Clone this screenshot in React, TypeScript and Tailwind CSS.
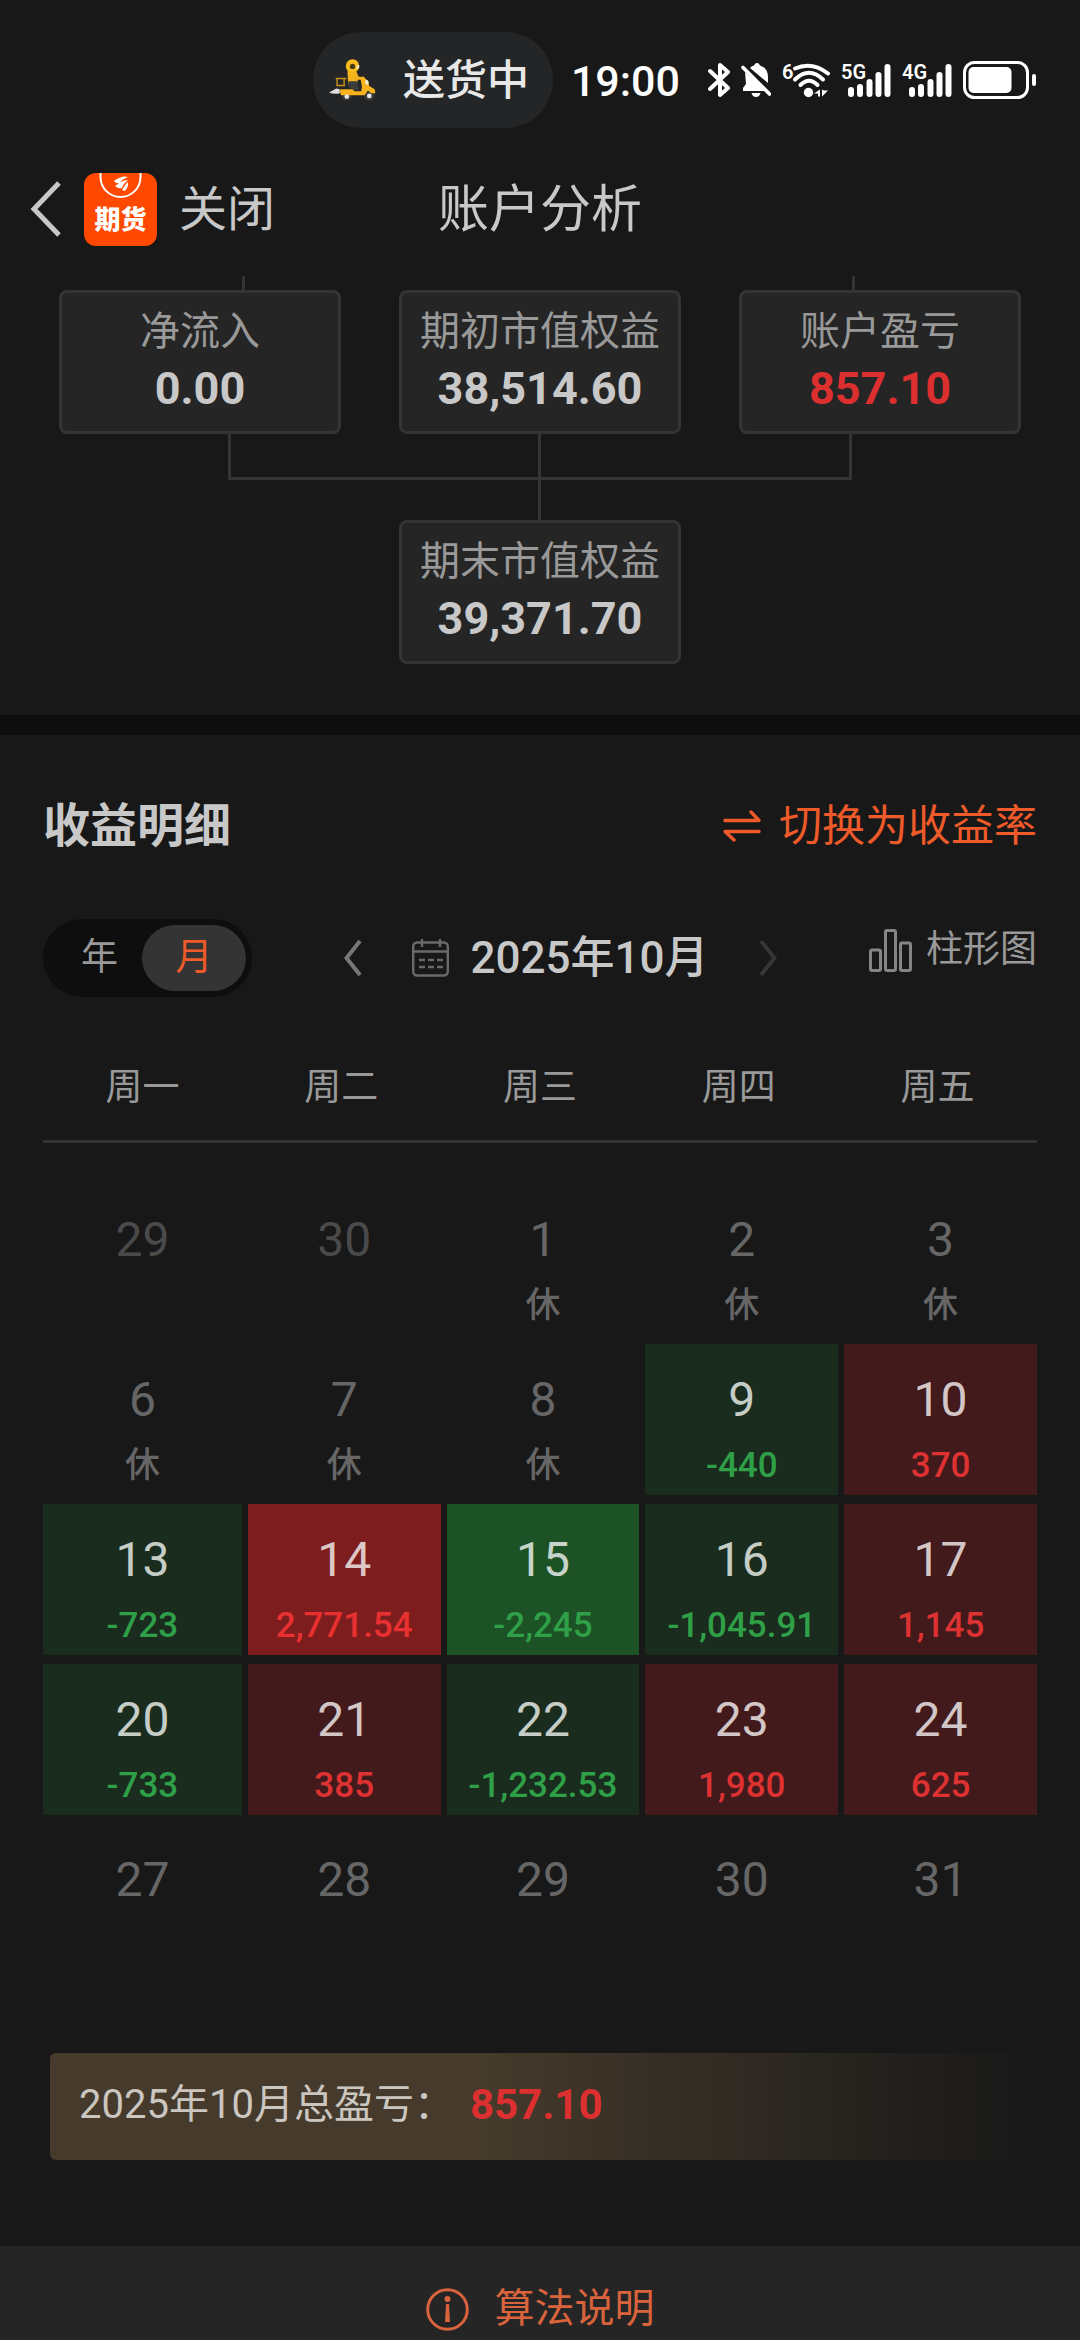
import React, { useState } from 'react';
import clsx from 'clsx';

type Tone = 'lossLight' | 'lossDeep' | 'gainLight' | 'gainDeep' | 'rest' | 'outside';

interface Day {
  day: number;
  note?: string;
  tone: Tone;
}

const weekdays = ['周一', '周二', '周三', '周四', '周五'];

const weeks: Day[][] = [
  [
    { day: 29, tone: 'outside' },
    { day: 30, tone: 'outside' },
    { day: 1, note: '休', tone: 'rest' },
    { day: 2, note: '休', tone: 'rest' },
    { day: 3, note: '休', tone: 'rest' },
  ],
  [
    { day: 6, note: '休', tone: 'rest' },
    { day: 7, note: '休', tone: 'rest' },
    { day: 8, note: '休', tone: 'rest' },
    { day: 9, note: '-440', tone: 'lossLight' },
    { day: 10, note: '370', tone: 'gainLight' },
  ],
  [
    { day: 13, note: '-723', tone: 'lossLight' },
    { day: 14, note: '2,771.54', tone: 'gainDeep' },
    { day: 15, note: '-2,245', tone: 'lossDeep' },
    { day: 16, note: '-1,045.91', tone: 'lossLight' },
    { day: 17, note: '1,145', tone: 'gainLight' },
  ],
  [
    { day: 20, note: '-733', tone: 'lossLight' },
    { day: 21, note: '385', tone: 'gainLight' },
    { day: 22, note: '-1,232.53', tone: 'lossLight' },
    { day: 23, note: '1,980', tone: 'gainLight' },
    { day: 24, note: '625', tone: 'gainLight' },
  ],
  [
    { day: 27, tone: 'rest' },
    { day: 28, tone: 'rest' },
    { day: 29, tone: 'rest' },
    { day: 30, tone: 'rest' },
    { day: 31, tone: 'rest' },
  ],
];

const cellStyle: Record<Tone, string> = {
  lossLight: 'bg-[#1a2c1e]',
  lossDeep: 'bg-[#1c5225]',
  gainLight: 'bg-[#421a1b]',
  gainDeep: 'bg-[#7d1d1d]',
  rest: '',
  outside: '',
};

const dayStyle: Record<Tone, string> = {
  lossLight: 'text-[#c6cdc7]',
  lossDeep: 'text-[#c6d3c8]',
  gainLight: 'text-[#d3c6c6]',
  gainDeep: 'text-[#dcc6c6]',
  rest: 'text-[#666666]',
  outside: 'text-[#4a4a4a]',
};

const noteStyle: Record<Tone, string> = {
  lossLight: 'text-[#2fa048]',
  lossDeep: 'text-[#2fa048]',
  gainLight: 'text-[#de3232]',
  gainDeep: 'text-[#e83030]',
  rest: 'text-[#666666]',
  outside: 'text-[#4a4a4a]',
};

function ScooterIcon() {
  return (
    <svg className="h-[42px] w-[47px]" viewBox="0 0 140 125" aria-hidden="true">
      <circle cx="53" cy="110" r="14" fill="#3b3b3b" />
      <circle cx="120" cy="110" r="14" fill="#3b3b3b" />
      <path d="M20 58h32M24 60v20M45 60v20M22 79h26" stroke="#c9921c" strokeWidth="4" fill="none" />
      <path d="M55 36h26l7 16 16 2v8H86l-3 14H57z" fill="#f2b31d" />
      <circle cx="70" cy="21" r="20" fill="#f9bd1f" />
      <circle cx="70" cy="22" r="8" fill="#4a3a12" />
      <path d="M83 17l8 3-2 8-7 1z" fill="#f3e6c4" />
      <path d="M58 66h26l6 26H70l-14-12z" fill="#3a3b3a" />
      <path d="M93 54l10-2 13 14 4 14 16 10 2 12h-12l-10-8-10 14H36q-6-8-2-18h36l6 6h20l2-14z" fill="#f7b21c" />
      <path d="M108 62a8 8 0 0 1 10 8l-2 8-8-4z" fill="#f4ead2" />
      <path d="M0 100l22-12 10 2v12q-16 4-32-2z" fill="#dedede" />
      <circle cx="53" cy="112" r="7" fill="#e6e6e6" />
      <circle cx="120" cy="110" r="7" fill="#e6e6e6" />
    </svg>
  );
}

function BluetoothIcon() {
  return (
    <svg className="h-[36px] w-[22px]" viewBox="0 0 22 36" fill="none" stroke="#fff" strokeWidth="4" strokeLinecap="round" strokeLinejoin="round" aria-hidden="true">
      <path d="M2 9l18 17-8 7V3l8 7L2 27" />
    </svg>
  );
}

function BellOffIcon() {
  return (
    <svg className="h-[36px] w-[30px]" viewBox="0 0 30 36" aria-hidden="true">
      <path d="M4 10l21 19H2v-3l3-4z" fill="#fff" />
      <path d="M9 6q1-2 4-2.600Q14 1 16 1q2 0 3 2.400 8 2.600 8 12V21z" fill="#fff" />
      <path d="M10.500 31h9q-1 4-4.500 4t-4.500-4z" fill="#fff" />
      <path d="M2 5.500L28.500 32" stroke="#fff" strokeWidth="3.600" strokeLinecap="round" />
    </svg>
  );
}

function WifiIcon() {
  return (
    <div className="relative h-[36px] w-[48px]">
      <svg className="size-full" viewBox="0 0 48 36" fill="none" aria-hidden="true">
        <g stroke="#fff" strokeWidth="4" strokeLinecap="round">
          <path d="M13 6.500Q30-1 46 11.500" />
          <path d="M13 17.500Q27 4 41 17.500" />
          <path d="M18.500 23Q27 14.500 35.500 23" />
        </g>
        <circle cx="26.500" cy="30.500" r="4.700" fill="#fff" />
        <path d="M32 31.500l6-4v7h-2v-3zM40 27.500v7l6-6h-4z" fill="#fff" />
      </svg>
      <span className="absolute left-0 top-0 text-[20px] font-semibold leading-[20px]">6</span>
    </div>
  );
}

function SignalIcon({ label }: { label: string }) {
  return (
    <div className="relative h-[36px] w-[50px]">
      <svg className="size-full" viewBox="0 0 50 36" fill="none" stroke="#fff" strokeWidth="6" strokeLinecap="round" aria-hidden="true">
        <path d="M10 28v4M19 25v7M28.500 20v12M37.500 13v19M46.500 5v27" />
      </svg>
      <span className="absolute left-0 top-0 text-[20px] font-semibold leading-[20px]">{label}</span>
    </div>
  );
}

function BatteryIcon() {
  return (
    <svg className="h-[38px] w-[73px]" viewBox="0 0 73 38" aria-hidden="true">
      <rect x="1.500" y="1.500" width="63" height="35" rx="10" fill="none" stroke="#fff" strokeWidth="3" />
      <rect x="5.500" y="6" width="43" height="26" rx="5" fill="#fff" />
      <rect x="69" y="13" width="4" height="12" rx="2" fill="#fff" />
    </svg>
  );
}

function StatusBar() {
  return (
    <div className="flex items-center justify-end pr-[44px] pt-8 text-white">
      <div className="flex h-24 w-60 shrink-0 items-center justify-between rounded-full bg-[#232527] pl-4 pr-6">
        <ScooterIcon />
        <span className="pt-[2px] text-[42px] font-medium leading-[60px] text-[#e8e8e8]">送货中</span>
      </div>
      <span className="ml-[18px] pt-[2px] text-[43px] font-medium leading-[60px]">19:00</span>
      <div className="ml-[28px] flex items-center gap-[11px]">
        <BluetoothIcon />
        <BellOffIcon />
        <WifiIcon />
        <SignalIcon label="5G" />
        <SignalIcon label="4G" />
        <BatteryIcon />
      </div>
    </div>
  );
}

function AppLogo() {
  return (
    <div className="relative size-[73px] overflow-hidden rounded-[12px] bg-[#ff4800]">
      <svg className="size-full" viewBox="0 0 73 73" fill="none" aria-hidden="true">
        <path d="M16.500 0v4a20 20 0 0 0 40 0V0" stroke="#fff" strokeWidth="2" />
        <path d="M30 8Q38 2 44 4q-7 3-8 6-4 1-6-2zM31 13q9-7 13-6-5 4-6 8-4 1-7-2zM38 17q5-8 6-8 1 4-3 9z" fill="#fff" />
      </svg>
      <span className="absolute inset-x-0 top-[32px] text-center text-[26px] font-black leading-[30px] text-white">期货</span>
    </div>
  );
}

function Header() {
  return (
    <header className="mt-[31px] grid h-[100px] grid-cols-[1fr_auto_1fr] items-center px-[30px] text-[#c8c8c8]">
      <div className="flex items-center">
        <button type="button" aria-label="返回">
          <svg className="h-[56px] w-[32px]" viewBox="0 0 32 56" fill="none" stroke="currentColor" strokeWidth="5" aria-hidden="true">
            <path d="M29 2L4 28l25 26" />
          </svg>
        </button>
        <div className="ml-[22px]">
          <AppLogo />
        </div>
        <button type="button" className="ml-[22px] pt-[2px] text-[48px] leading-[60px]">关闭</button>
      </div>
      <h1 className="pt-[2px] text-[51px] leading-[60px]">账户分析</h1>
    </header>
  );
}

interface EquityCardProps {
  label: string;
  value: string;
  gain?: boolean;
}

function EquityCard({ label, value, gain }: EquityCardProps) {
  return (
    <div className="flex h-[144px] flex-col items-center rounded-[8px] border-[3px] border-[#343434] bg-[#252525] pt-[9px]">
      <span className="text-[40px] leading-[60px] text-[#999999]">{label}</span>
      <span className={clsx('text-[45px] font-bold leading-[54px]', gain ? 'text-[#dc2f2f]' : 'text-[#c8c8c8]')}>
        {value}
      </span>
    </div>
  );
}

function EquityFlow() {
  return (
    <section className="pb-[51px] pt-[17px]">
      <svg className="block w-full" viewBox="0 0 1080 14" fill="none" stroke="#343434" strokeWidth="3" aria-hidden="true">
        <path d="M243.500 0v14M853.500 0v14" />
      </svg>
      <div className="grid grid-cols-3 gap-[58px] px-[59px]">
        <EquityCard label="净流入" value="0.00" />
        <EquityCard label="期初市值权益" value="38,514.60" />
        <EquityCard label="账户盈亏" value="857.10" gain />
      </div>
      <svg className="block w-full" viewBox="0 0 1080 86" fill="none" stroke="#343434" strokeWidth="3" aria-hidden="true">
        <path d="M229.500 0v44.500h621V0M539.500 0v86" />
      </svg>
      <div className="grid grid-cols-3 gap-[58px] px-[59px]">
        <div className="col-start-2">
          <EquityCard label="期末市值权益" value="39,371.70" />
        </div>
      </div>
    </section>
  );
}

function MonthPicker() {
  return (
    <div className="flex items-center gap-[50px]">
      <button type="button" aria-label="上个月" className="text-[#777777]">
        <svg className="h-[36px] w-[18px]" viewBox="0 0 18 36" fill="none" stroke="currentColor" strokeWidth="4" aria-hidden="true">
          <path d="M16 1L2.500 18 16 35" />
        </svg>
      </button>
      <button type="button" className="flex items-center gap-[21px]">
        <svg className="h-[38px] w-[37px]" viewBox="0 0 37 38" fill="none" stroke="#6a6a6a" strokeWidth="2.400" aria-hidden="true">
          <rect x="1.200" y="3.500" width="34.600" height="33" rx="4" />
          <path d="M1 12.500h35M10 0v8M28 0v8" />
          <path d="M7 21h6M16 21h6M25 21h6M7 28h6M16 28h6M25 28h6" />
        </svg>
        <span className="text-[44px] font-medium leading-[60px] text-[#c8c8c8]">2025年10月</span>
      </button>
      <button type="button" aria-label="下个月" className="text-[#363636]">
        <svg className="h-[36px] w-[18px]" viewBox="0 0 18 36" fill="none" stroke="currentColor" strokeWidth="4" aria-hidden="true">
          <path d="M2 1l13.500 17L2 35" />
        </svg>
      </button>
    </div>
  );
}

function ProfitCalendar() {
  return (
    <table className="mt-[61px] w-full table-fixed">
      <thead>
        <tr className="border-b-[3px] border-[#343434]">
          {weekdays.map((name) => (
            <th key={name} scope="col" className="pb-[22px] text-[37px] font-normal leading-[60px] text-[#999999]">
              {name}
            </th>
          ))}
        </tr>
      </thead>
      <tbody>
        {weeks.map((week, index) => (
          <tr key={index} className="first:[&>td]:pt-[41px]">
            {week.map(({ day, note, tone }) => (
              <td key={day} className="p-0 pb-[9px] pl-[6px] first:pl-0">
                <div className={clsx('flex h-[151px] flex-col items-center pt-[26px]', cellStyle[tone])}>
                  <span className={clsx('text-[48px] leading-[60px]', dayStyle[tone])}>{day}</span>
                  <span className={clsx('mt-[10px] text-[35px] font-medium leading-[52px]', noteStyle[tone])}>
                    {note}
                  </span>
                </div>
              </td>
            ))}
          </tr>
        ))}
      </tbody>
    </table>
  );
}

export default function App() {
  const [period, setPeriod] = useState('月');

  return (
    <div className="flex min-h-screen flex-col bg-[#181818] font-[Roboto,'Noto_Sans_CJK_SC',sans-serif]">
      <StatusBar />
      <Header />
      <EquityFlow />

      <section className="border-t-[20px] border-[#0e0e0e] px-[43px] pb-[86px] pt-[61px]">
        <div className="flex items-center justify-between">
          <h2 className="text-[47px] font-bold leading-[60px] text-[#c8c8c8]">收益明细</h2>
          <button type="button" className="flex items-center gap-[18px] text-[#ee5a29]">
            <svg className="h-[32px] w-[38px]" viewBox="0 0 38 32" fill="none" stroke="currentColor" strokeWidth="3.400" strokeLinecap="round" strokeLinejoin="round" aria-hidden="true">
              <path d="M2 10.500h34L28 2M36 21.500H2L11 30" />
            </svg>
            <span className="text-[43px] leading-[60px]">切换为收益率</span>
          </button>
        </div>

        <div className="mt-[63px] flex items-center justify-between">
          <div className="flex h-[78px] w-[209px] rounded-full bg-[#0e0e0e] p-[6px]">
            {['年', '月'].map((name) => (
              <button
                key={name}
                type="button"
                aria-pressed={period === name}
                onClick={() => setPeriod(name)}
                className={clsx(
                  'rounded-full text-[37px] leading-[60px]',
                  period === name ? 'w-[104px] bg-[#343434] text-[#ee5a29]' : 'flex-1 pl-2 text-[#999999]',
                )}
              >
                {name}
              </button>
            ))}
          </div>
          <MonthPicker />
          <button type="button" className="flex items-center gap-[14px] self-start pt-px text-[#999999]">
            <svg className="h-[43px] w-[43px]" viewBox="0 0 43 43" fill="none" stroke="#858585" strokeWidth="3" aria-hidden="true">
              <rect x="1.500" y="21" width="10" height="20.500" rx="1.500" />
              <rect x="16.500" y="1.500" width="10" height="40" rx="1.500" />
              <rect x="31.500" y="14" width="10" height="27.500" rx="1.500" />
            </svg>
            <span className="text-[37px] leading-[60px]">柱形图</span>
          </button>
        </div>

        <ProfitCalendar />

        <div className="ml-[7px] mt-[69px] flex h-[107px] items-center gap-4 rounded-[6px] bg-linear-to-r from-[#453a2b] from-44% to-[#181818] pb-[4px] pl-[29px]">
          <span className="text-[40px] leading-[60px] text-[#cbc6c0]">2025年10月总盈亏：</span>
          <span className="text-[42px] font-bold leading-[60px] text-[#dc2f2f]">857.10</span>
        </div>
      </section>

      <footer className="flex flex-1 items-start justify-center bg-[#252525] pt-[33px]">
        <button type="button" className="flex items-center gap-[26px] text-[#d9633c]">
          <svg className="size-[43px]" viewBox="0 0 43 43" fill="none" aria-hidden="true">
            <circle cx="21.500" cy="21.500" r="19.800" stroke="currentColor" strokeWidth="3" />
            <circle cx="21.500" cy="11" r="3" fill="currentColor" />
            <path d="M20 16h3l1 18h-5z" fill="currentColor" />
          </svg>
          <span className="text-[40px] leading-[60px]">算法说明</span>
        </button>
      </footer>
    </div>
  );
}
